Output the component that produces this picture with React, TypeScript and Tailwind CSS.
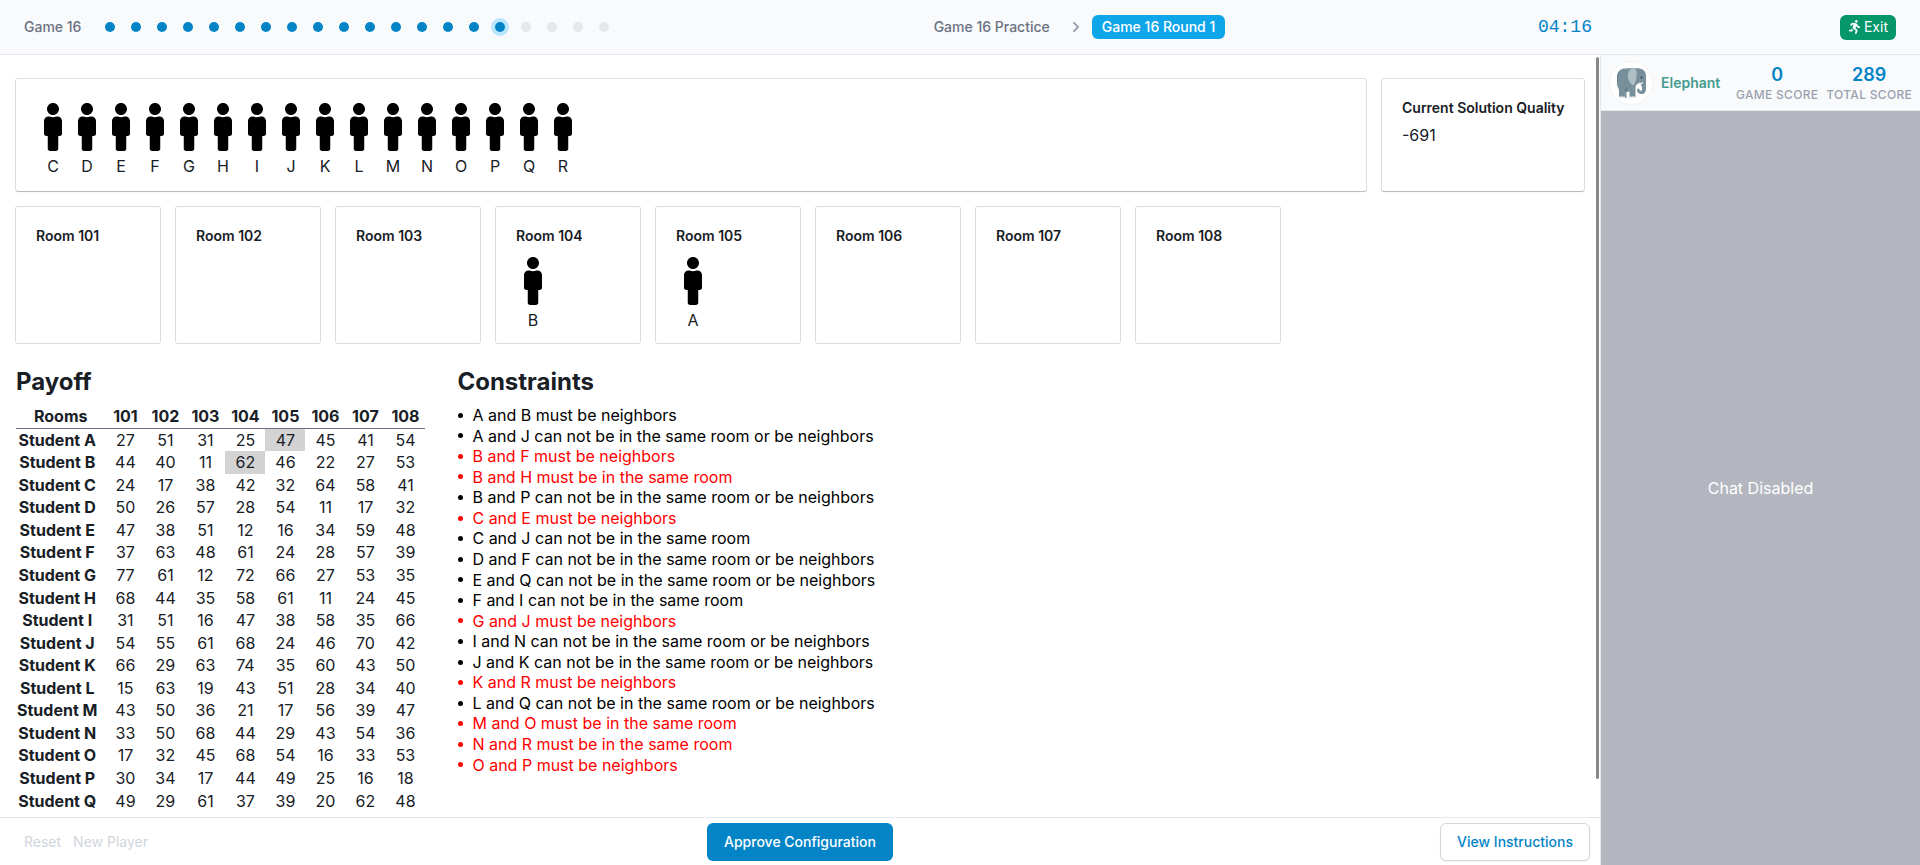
import React from "react";
import { FaMale, FaChevronRight } from "react-icons/fa";
import { FaPersonRunning } from "react-icons/fa6";

const ROOMS = [101, 102, 103, 104, 105, 106, 107, 108];

const PAYOFFS: Record<string, number[]> = {
  A: [27, 51, 31, 25, 47, 45, 41, 54],
  B: [44, 40, 11, 62, 46, 22, 27, 53],
  C: [24, 17, 38, 42, 32, 64, 58, 41],
  D: [50, 26, 57, 28, 54, 11, 17, 32],
  E: [47, 38, 51, 12, 16, 34, 59, 48],
  F: [37, 63, 48, 61, 24, 28, 57, 39],
  G: [77, 61, 12, 72, 66, 27, 53, 35],
  H: [68, 44, 35, 58, 61, 11, 24, 45],
  I: [31, 51, 16, 47, 38, 58, 35, 66],
  J: [54, 55, 61, 68, 24, 46, 70, 42],
  K: [66, 29, 63, 74, 35, 60, 43, 50],
  L: [15, 63, 19, 43, 51, 28, 34, 40],
  M: [43, 50, 36, 21, 17, 56, 39, 47],
  N: [33, 50, 68, 44, 29, 43, 54, 36],
  O: [17, 32, 45, 68, 54, 16, 33, 53],
  P: [30, 34, 17, 44, 49, 25, 16, 18],
  Q: [49, 29, 61, 37, 39, 20, 62, 48],
};

const ASSIGNED: Record<string, number> = { A: 105, B: 104 };
const UNASSIGNED = "CDEFGHIJKLMNOPQR".split("");

type Kind = "neighbors" | "same" | "notSame" | "notNear";
const KIND_TEXT: Record<Kind, string> = {
  neighbors: "must be neighbors",
  same: "must be in the same room",
  notSame: "can not be in the same room",
  notNear: "can not be in the same room or be neighbors",
};

const CONSTRAINTS: { pair: [string, string]; kind: Kind; violated?: boolean }[] = [
  { pair: ["A", "B"], kind: "neighbors" },
  { pair: ["A", "J"], kind: "notNear" },
  { pair: ["B", "F"], kind: "neighbors", violated: true },
  { pair: ["B", "H"], kind: "same", violated: true },
  { pair: ["B", "P"], kind: "notNear" },
  { pair: ["C", "E"], kind: "neighbors", violated: true },
  { pair: ["C", "J"], kind: "notSame" },
  { pair: ["D", "F"], kind: "notNear" },
  { pair: ["E", "Q"], kind: "notNear" },
  { pair: ["F", "I"], kind: "notSame" },
  { pair: ["G", "J"], kind: "neighbors", violated: true },
  { pair: ["I", "N"], kind: "notNear" },
  { pair: ["J", "K"], kind: "notNear" },
  { pair: ["K", "R"], kind: "neighbors", violated: true },
  { pair: ["L", "Q"], kind: "notNear" },
  { pair: ["M", "O"], kind: "same", violated: true },
  { pair: ["N", "R"], kind: "same", violated: true },
  { pair: ["O", "P"], kind: "neighbors", violated: true },
];

const TOTAL_GAMES = 20;
const CURRENT_GAME = 16;

function Student({ name }: { name: string }) {
  return (
    <div className="flex w-[34px] flex-col items-center gap-1 pt-1">
      <FaMale className="h-12 w-[18px] shrink-0 text-black" aria-hidden="true" />
      <span className="leading-[22px]">{name}</span>
    </div>
  );
}

function Elephant() {
  return (
    <svg viewBox="0 0 30 30" className="size-[30px]" aria-hidden="true">
      <path
        fill="#78909c"
        d="M1 10C1 4.500 3.500 1 8 .5C11 .2 19 0 22 .3C27 .5 30 3.500 30 8V21C30 24 28.500 26 26 26C23 26 21 24.500 21 22C21 20.500 23 20 23.500 21.500C23.800 23 26 23.500 26 21C26 18 25.500 16 23 15.500C21 15.500 20 17 19.500 19V30H13.500V23.500C12 24 10.500 24 9.500 23.500V30H3V22C1.500 19 1 14 1 10Z"
      />
      <path fill="#6b838f" d="M1 10C1 7 2 4 3.500 2.500C2.500 6 3 10 2 13V20C1.300 17 1 13 1 10Z" />
      <path fill="#607d8b" d="M9.500 30V24C8.500 21 10 19 11 19L10.500 24V30Z" />
      <path fill="#607d8b" d="M20 1C21.500 5 21.500 10 19.500 13.500L18 16L18 15C20.500 10 20.500 5 19.500 1Z" />
      <path fill="#b0bec5" d="M14 2C16 0 20 0 20.500 3C21.500 8 20 14 17.500 17.500C14 16 11.500 11 12 6C12.200 4 13 3 14 2Z" />
      <path fill="#fff" d="M23 14.500C24.500 15.300 26 15 27 13.800C27.500 15.800 25 17 23 15.800Z" />
      <circle cx="25.500" cy="9.500" r="1" fill="#37474f" />
      <path fill="#eceff1" d="M3 30V29Q4 27.500 5 29Q6 27.500 7 29Q8 27.500 9 29V30ZM13.500 30V29Q14.500 27.500 15.500 29Q16.500 27.500 17.500 29Q18.500 27.500 19.500 29V30Z" />
    </svg>
  );
}

function Score({ value, label }: { value: number; label: string }) {
  return (
    <div className="flex flex-col items-center">
      <span className="text-lg leading-5 font-semibold text-[#0284c7]">{value}</span>
      <span className="text-xs leading-5 font-medium tracking-wide whitespace-nowrap text-gray-400 uppercase">
        {label}
      </span>
    </div>
  );
}

const card =
  "rounded-[2px] bg-white p-5 shadow-[0_0_0_1px_rgba(17,20,24,0.13),0_1px_1px_rgba(17,20,24,0.2)]";

export default function App() {
  return (
    <div className="flex h-screen flex-col overflow-hidden bg-white font-[Inter,'Liberation_Sans',sans-serif] text-base text-[#182026]">
      <header className="flex h-[55px] shrink-0 items-center justify-between border-b border-gray-200 bg-gray-50 px-6 text-sm font-medium text-gray-500">
        <nav aria-label="Games" className="flex w-[597px] items-center gap-6">
          <span>Game {CURRENT_GAME}</span>
          <ol className="flex items-center gap-4">
            {Array.from({ length: TOTAL_GAMES }, (_, i) => i + 1).map((n) => (
              <li
                key={n}
                className={
                  n === CURRENT_GAME
                    ? "size-2.5 rounded-full bg-[#0284c7] ring-4 ring-[#bae6fd]"
                    : n < CURRENT_GAME
                      ? "size-2.5 rounded-full bg-[#0284c7]"
                      : "size-2.5 rounded-full bg-gray-200"
                }
              />
            ))}
          </ol>
        </nav>
        <div className="flex items-center">
          <span>Game 16 Practice</span>
          <FaChevronRight className="mr-2.5 ml-5 size-3 text-gray-400" aria-hidden="true" />
          <span className="rounded-md bg-[#0ea5e9] px-2.5 py-0.5 leading-5 text-white">Game 16 Round 1</span>
        </div>
        <div className="flex items-center gap-[248px]">
          <time className="font-['Liberation_Mono',monospace] text-lg leading-6 font-normal text-[#0284c7]">04:16</time>
          <button type="button" className="flex h-[25px] items-center gap-0.5 rounded-md bg-[#059669] px-2 font-normal text-white">
            <FaPersonRunning className="size-3.5" aria-hidden="true" />
            Exit
          </button>
        </div>
      </header>

      <div className="flex min-h-0 flex-1">
        <div className="flex min-w-0 flex-1 flex-col">
          <div className="relative min-h-0 flex-1">
            <main className="flex h-full flex-col overflow-y-auto px-4 pt-6 [scrollbar-width:none]">
              <div className="flex gap-4">
                <section className={`${card} flex h-28 flex-1`}>
                  {UNASSIGNED.map((s) => (
                    <Student key={s} name={s} />
                  ))}
                </section>
                <section className={`${card} h-28 w-[202px]`}>
                  <h2 className="pb-2 text-sm leading-[18px] font-semibold whitespace-nowrap">Current Solution Quality</h2>
                  <p className="leading-5">-691</p>
                </section>
              </div>

              <div className="mt-4 flex gap-4">
                {ROOMS.map((room) => (
                  <section
                    key={room}
                    className="h-[136px] w-36 rounded-[2px] bg-white p-5 shadow-[0_0_0_1px_rgba(17,20,24,0.15)]"
                  >
                    <h2 className="pb-2 text-sm leading-[18px] font-semibold">Room {room}</h2>
                    <div className="flex">
                      {Object.keys(ASSIGNED)
                        .filter((s) => ASSIGNED[s] === room)
                        .map((s) => (
                          <Student key={s} name={s} />
                        ))}
                    </div>
                  </section>
                ))}
              </div>

              <div className="mt-6 flex gap-8">
                <section>
                  <h2 className="text-2xl leading-[30px] font-bold">Payoff</h2>
                  <table className="mt-2 border-collapse text-center leading-[1.286]">
                    <thead>
                      <tr className="border-b border-gray-500">
                        <th scope="col" className="w-[89px] p-px font-bold">Rooms</th>
                        {ROOMS.map((r) => (
                          <th key={r} scope="col" className="w-10 p-px font-bold">{r}</th>
                        ))}
                      </tr>
                    </thead>
                    <tbody>
                      {Object.entries(PAYOFFS).map(([s, values]) => (
                        <tr key={s}>
                          <th scope="row" className="py-px pr-2 pl-px font-bold whitespace-nowrap">Student {s}</th>
                          {values.map((v, i) => (
                            <td key={i} className={ASSIGNED[s] === ROOMS[i] ? "bg-[#d3d3d3] p-px" : "p-px"}>
                              {v}
                            </td>
                          ))}
                        </tr>
                      ))}
                    </tbody>
                  </table>
                </section>
                <section>
                  <h2 className="text-2xl leading-[30px] font-bold">Constraints</h2>
                  <ul className="mt-2 pl-px leading-[1.286] text-black">
                    {CONSTRAINTS.map(({ pair, kind, violated }) => (
                      <li
                        key={pair.join("")}
                        className={
                          violated
                            ? "flex items-center gap-[9px] text-[#ff0000] before:size-[5px] before:rounded-full before:bg-current"
                            : "flex items-center gap-[9px] before:size-[5px] before:rounded-full before:bg-current"
                        }
                      >
                        {`${pair[0]} and ${pair[1]} ${KIND_TEXT[kind]}`}
                      </li>
                    ))}
                  </ul>
                </section>
              </div>
            </main>
            <div className="absolute top-0.5 right-px bottom-[38px] w-[3px] rounded-full bg-[#888]" aria-hidden="true" />
          </div>

          <footer className="grid h-12 shrink-0 grid-cols-3 items-center border-t border-gray-200 px-2.5 text-sm">
            <div className="flex gap-3 pl-3.5 text-gray-300">
              <button type="button" disabled>Reset</button>
              <button type="button" disabled>New Player</button>
            </div>
            <button type="button" className="h-[38px] justify-self-center rounded-md bg-[#0284c7] px-[17px] font-medium text-white">
              Approve Configuration
            </button>
            <button type="button" className="h-[38px] justify-self-end rounded-md border border-gray-300 bg-white px-4 font-medium text-[#0284c7] shadow-xs">
              View Instructions
            </button>
          </footer>
        </div>

        <aside className="flex w-80 shrink-0 flex-col border-l border-gray-200">
          <div className="flex h-14 shrink-0 items-center border-b border-gray-200 bg-gray-50 px-2">
            <div className="flex size-11 shrink-0 items-center justify-center rounded-full border border-gray-100 bg-white">
              <Elephant />
            </div>
            <span className="ml-2 text-sm font-semibold text-[#459c8f]">Elephant</span>
            <div className="ml-auto flex gap-2 pt-1">
              <Score value={0} label="Game Score" />
              <Score value={289} label="Total Score" />
            </div>
          </div>
          <div className="flex flex-1 items-center justify-center bg-[#b4b7c0] text-white">Chat Disabled</div>
        </aside>
      </div>
    </div>
  );
}
